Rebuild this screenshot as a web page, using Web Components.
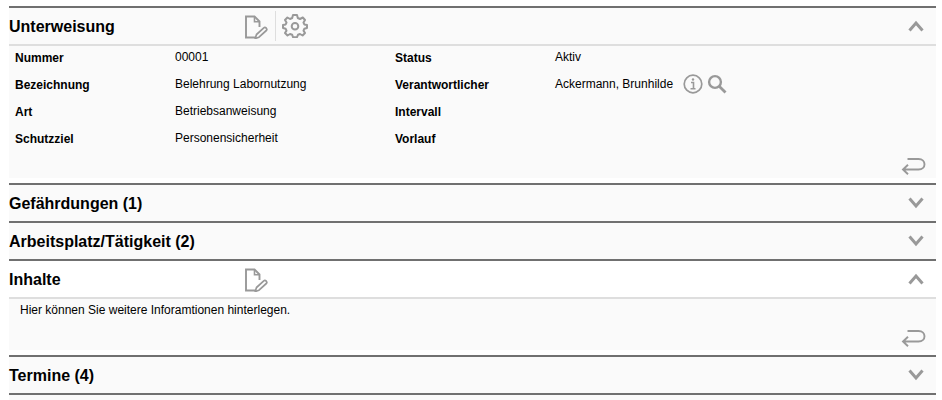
<!DOCTYPE html>
<html lang="de">
<head>
<meta charset="utf-8">
<title>Unterweisung</title>
<style>
html { background: #fff; }
body { margin: 0; font: 12px/16px "Liberation Sans", Arial, sans-serif; color: #000; }
</style>
</head>
<body>
<instruction-page></instruction-page>

<template id="page-tpl">
  <style>
    :host { display: flex; flex-direction: column; box-sizing: border-box; min-height: 100vh; padding: 6px 6px 0 9px; }
    .rest { flex: 1; min-height: 5px; background: #fafafa; border-top: 2px solid #707070; }
    .person { display: flex; align-items: center; }
    .person icon-button { margin-left: 4px; }
    .person icon-button:first-of-type { margin-left: 10px; }
    p { margin: 0; padding: 3px 11px; }
  </style>
  <fold-section heading="Unterweisung" open>
    <icon-button slot="tools" icon="edit" label="Bearbeiten"></icon-button>
    <icon-button slot="tools" icon="gear" label="Einstellungen" divided></icon-button>
    <field-list>
      <field-row label="Nummer">00001</field-row>
      <field-row label="Status">Aktiv</field-row>
      <field-row label="Bezeichnung">Belehrung Labornutzung</field-row>
      <field-row label="Verantwortlicher"><span class="person">Ackermann, Brunhilde<icon-button icon="info" label="Information"></icon-button><icon-button icon="search" label="Suchen"></icon-button></span></field-row>
      <field-row label="Art">Betriebsanweisung</field-row>
      <field-row label="Intervall"></field-row>
      <field-row label="Schutzziel">Personensicherheit</field-row>
      <field-row label="Vorlauf"></field-row>
    </field-list>
  </fold-section>
  <fold-section heading="Gefährdungen (1)"></fold-section>
  <fold-section heading="Arbeitsplatz/Tätigkeit (2)"></fold-section>
  <fold-section heading="Inhalte" open plain>
    <icon-button slot="tools" icon="edit" label="Bearbeiten"></icon-button>
    <p>Hier können Sie weitere Inforamtionen hinterlegen.</p>
  </fold-section>
  <fold-section heading="Termine (4)"></fold-section>
  <div class="rest"></div>
</template>

<template id="section-tpl">
  <style>
    :host { display: block; border-top: 2px solid #707070; }
    :host([open]) { padding-bottom: 5px; }
    header { display: grid; grid-template-columns: 233px 1fr auto; align-items: center; height: 36px; background: #fafafa; }
    :host([plain]) header { background: #fff; }
    h2 { margin: 0; padding-top: 2px; font-size: 16px; line-height: 20px; font-weight: bold; white-space: nowrap; }
    .tools { display: flex; align-items: center; }
    .toggle { margin-right: 11px; }
    .body { display: none; background: #fafafa; border-top: 2px solid #dedede; }
    :host([open]) .body { display: block; }
    .foot { display: flex; justify-content: flex-end; padding: 8px 9px 3px 0; }
  </style>
  <header>
    <h2></h2>
    <div class="tools"><slot name="tools"></slot></div>
    <icon-button class="toggle"></icon-button>
  </header>
  <div class="body">
    <slot></slot>
    <div class="foot"><icon-button icon="back" label="Zurück"></icon-button></div>
  </div>
</template>

<template id="list-tpl">
  <style>
    :host { display: grid; grid-template-columns: 380px 1fr; row-gap: 5px; padding-left: 6px; }
  </style>
  <slot></slot>
</template>

<template id="row-tpl">
  <style>
    :host { display: grid; grid-template-columns: 160px 1fr; height: 22px; align-items: center; }
    .label { font-weight: bold; padding-top: 2px; }
    .value { white-space: nowrap; }
  </style>
  <span class="label" id="l"></span>
  <div class="value" role="group" aria-labelledby="l"><slot></slot></div>
</template>

<template id="button-tpl">
  <style>
    :host { display: block; }
    :host([divided]) { border-left: 1px solid #dedede; margin-left: 7px; padding: 3px 0 3px 6px; }
    button { display: block; margin: 0; padding: 0; border: 0; background: none; color: #999; cursor: pointer; }
    svg { display: block; fill: none; stroke: currentColor; stroke-width: 2; }
  </style>
  <button type="button"></button>
</template>

<script>
const icons = {
  edit: [26, 26, '<path d="M17.500 14V8.500L12.500 3.500H4V24.500H13.500" stroke-width="1.900"/><path d="M12.500 3.500V8.800H17.500" stroke-width="1.600"/><path d="M13.200 25.500L14.500 21.500L21.800 14.800Q23 13.800 24.300 15.200Q25.400 16.500 24.300 17.500L17 24.200Z" stroke-width="1.700" stroke-linejoin="round"/>'],
  gear: [26, 24, '<path stroke-linejoin="round" stroke-width="2" d="M11 1H15L15.800 4L18 5L20.800 3.500L23 6L21.500 8.600L22.300 10.400L25 11V14L22.300 14.800L21.500 16.600L23 19L20.600 21.500L18 20L16 20.800L15 23.200H11L10.200 20.800L8 20L5.500 21.500L3 19L4.500 16.600L3.700 14.800L1 14V11L3.700 10.400L4.500 8.600L3 6L5.400 3.500L8 5L10.200 4Z"/><circle cx="13" cy="12.300" r="3.300"/>'],
  info: [20, 20, '<circle cx="10" cy="10" r="8.800" stroke-width="1.700"/><path d="M8 8.500H10.500V14.500M7.500 14.800H12.500" stroke-width="1.600"/><circle cx="10" cy="5.500" r="1.200" fill="currentColor" stroke="none"/>'],
  search: [20, 20, '<circle cx="8" cy="8" r="5.900" stroke-width="2.400"/><path d="M12.200 12.200L18.500 18.500" stroke-width="2.800"/>'],
  back: [26, 18, '<path d="M6.500 2H17.500C25.500 2 25.500 12.500 17.500 12.500H2M7 7.700L2 12.500L7 17.300" stroke-width="1.900"/>'],
  up: [18, 14, '<path d="M2.500 11.500L9 4L15.500 11.500" stroke-width="3"/>'],
  down: [18, 14, '<path d="M2.500 2.500L9 10L15.500 2.500" stroke-width="3"/>']
};

class ShadowElement extends HTMLElement {
  build(id) {
    if (this.shadowRoot) return this.shadowRoot;
    const root = this.attachShadow({ mode: 'open' });
    root.append(document.getElementById(id).content.cloneNode(true));
    return root;
  }
}

customElements.define('icon-button', class extends ShadowElement {
  static observedAttributes = ['icon', 'label'];
  connectedCallback() { this.build('button-tpl'); this.draw(); }
  attributeChangedCallback() { if (this.shadowRoot) this.draw(); }
  draw() {
    const icon = icons[this.getAttribute('icon')];
    if (!icon) return;
    const [w, h, shape] = icon;
    const button = this.shadowRoot.querySelector('button');
    button.setAttribute('aria-label', this.getAttribute('label') || '');
    button.innerHTML = `<svg width="${w}" height="${h}" viewBox="0 0 ${w} ${h}" aria-hidden="true">${shape}</svg>`;
  }
});

customElements.define('field-row', class extends ShadowElement {
  connectedCallback() {
    this.build('row-tpl').querySelector('.label').textContent = this.getAttribute('label');
  }
});

customElements.define('field-list', class extends ShadowElement {
  connectedCallback() { this.build('list-tpl'); }
});

customElements.define('fold-section', class extends ShadowElement {
  connectedCallback() {
    const root = this.build('section-tpl');
    root.querySelector('h2').textContent = this.getAttribute('heading');
    this.toggle = root.querySelector('.toggle');
    this.toggle.onclick = () => { this.toggleAttribute('open'); this.sync(); };
    this.sync();
  }
  sync() {
    const open = this.hasAttribute('open');
    this.toggle.setAttribute('icon', open ? 'up' : 'down');
    this.toggle.setAttribute('label', open ? 'Zuklappen' : 'Aufklappen');
  }
});

customElements.define('instruction-page', class extends ShadowElement {
  connectedCallback() { this.build('page-tpl'); }
});
</script>
</body>
</html>
